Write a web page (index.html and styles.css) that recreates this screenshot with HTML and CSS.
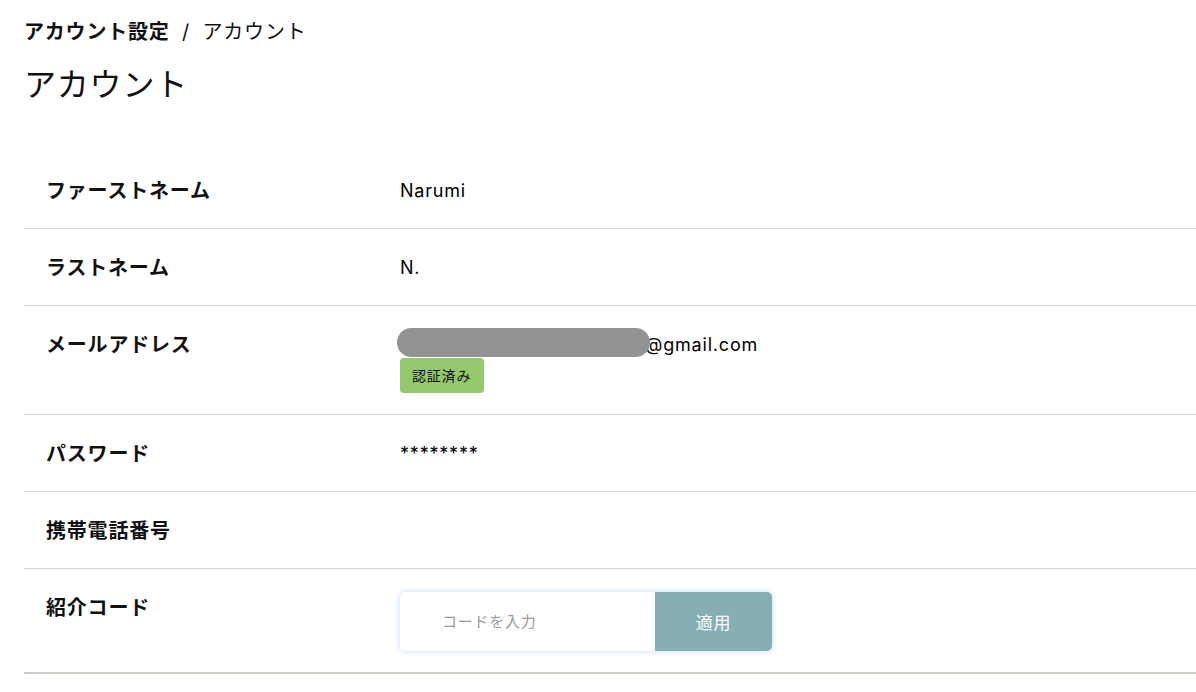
FILE: index.html
```html
<!DOCTYPE html>
<html lang="ja">
<head>
    <meta charset="UTF-8">
    <meta name="viewport" content="width=device-width, initial-scale=1.0">
    <title>アカウント</title>
    <link rel="stylesheet" href="styles.css">
</head>
<body>
    <div class="wrap">
        <div class="crumb">
            <b>アカウント設定</b>
            <span class="sep">/</span>
            <span>アカウント</span>
        </div>
        <h1 class="title">アカウント</h1>

        <table class="info">
            <tr>
                <th>ファーストネーム</th>
                <td>Narumi</td>
            </tr>
            <tr>
                <th>ラストネーム</th>
                <td>N.</td>
            </tr>
            <tr>
                <th>メールアドレス</th>
                <td>
                    <div class="mail"><span class="mask"></span>@gmail.com</div>
                    <div class="badge">認証済み</div>
                </td>
            </tr>
            <tr>
                <th>パスワード</th>
                <td>********</td>
            </tr>
            <tr>
                <th>携帯電話番号</th>
                <td></td>
            </tr>
            <tr class="last">
                <th>紹介コード</th>
                <td class="code">
                    <div class="codebox">
                        <input type="text" placeholder="コードを入力">
                        <button>適用</button>
                    </div>
                </td>
            </tr>
        </table>
    </div>
</body>
</html>
```

FILE: styles.css
```css
body{
    margin: 0;
    background: #fff;
    color: #111;
    font-family: "Inter", "Noto Sans CJK JP", sans-serif;
    letter-spacing: 0.05em;
}
.wrap{
    padding: 20px 0 0 24px;
}
.crumb{
    font-size: 20px;
    line-height: 24px;
}
.crumb b{
    font-weight: 700;
}
.crumb .sep{
    margin: 0 6px;
}
.title{
    margin: 21px 0 0;
    font-size: 32px;
    line-height: 40px;
    font-weight: 400;
}
.info{
    width: 100%;
    margin-top: 47px;
    border-collapse: collapse;
}
.info tr{
    border-bottom: 1px solid #d6d2cc;
}
.info tr.last{
    border-bottom: 2px solid #cfc9c3;
}
.info th{
    width: 354px;
    padding: 28px 0 26px 22px;
    text-align: left;
    vertical-align: top;
    font-size: 20px;
    line-height: 22px;
    font-weight: 700;
}
.info td{
    padding: 28px 0 26px;
    vertical-align: top;
    font-size: 18px;
    line-height: 22px;
    color: #000;
}
.mail{
    display: flex;
    height: 22px;
}
.mask{
    position: relative;
    z-index: 1;
    flex: none;
    width: 253px;
    height: 29px;
    margin: -6px -5px 0 -3px;
    border-radius: 15px;
    background: #939393;
}
.badge{
    width: fit-content;
    margin: 2px 0 -5px;
    padding: 0 13px 0 12px;
    height: 35px;
    line-height: 35px;
    border-radius: 4px;
    background: #93c86c;
    font-size: 14px;
    color: #111;
}
.info td.code{
    padding: 23px 0 21px;
}
.codebox{
    display: flex;
    width: 372px;
    height: 59px;
    border-radius: 5px;
    box-shadow: 0 0 6px rgba(90, 150, 230, .35);
}
.codebox input{
    width: 255px;
    box-sizing: border-box;
    padding: 0 0 0 42px;
    border: 0;
    border-radius: 5px 0 0 5px;
    background: #fff;
    font-family: inherit;
    font-size: 15px;
    letter-spacing: 0.05em;
    outline: none;
}
.codebox input::placeholder{
    color: #9a9a9a;
}
.codebox button{
    flex: 1;
    border: 0;
    border-radius: 0 5px 5px 0;
    background: #86afb5;
    color: #fff;
    font-family: inherit;
    font-size: 17px;
    letter-spacing: 0.05em;
}
```
